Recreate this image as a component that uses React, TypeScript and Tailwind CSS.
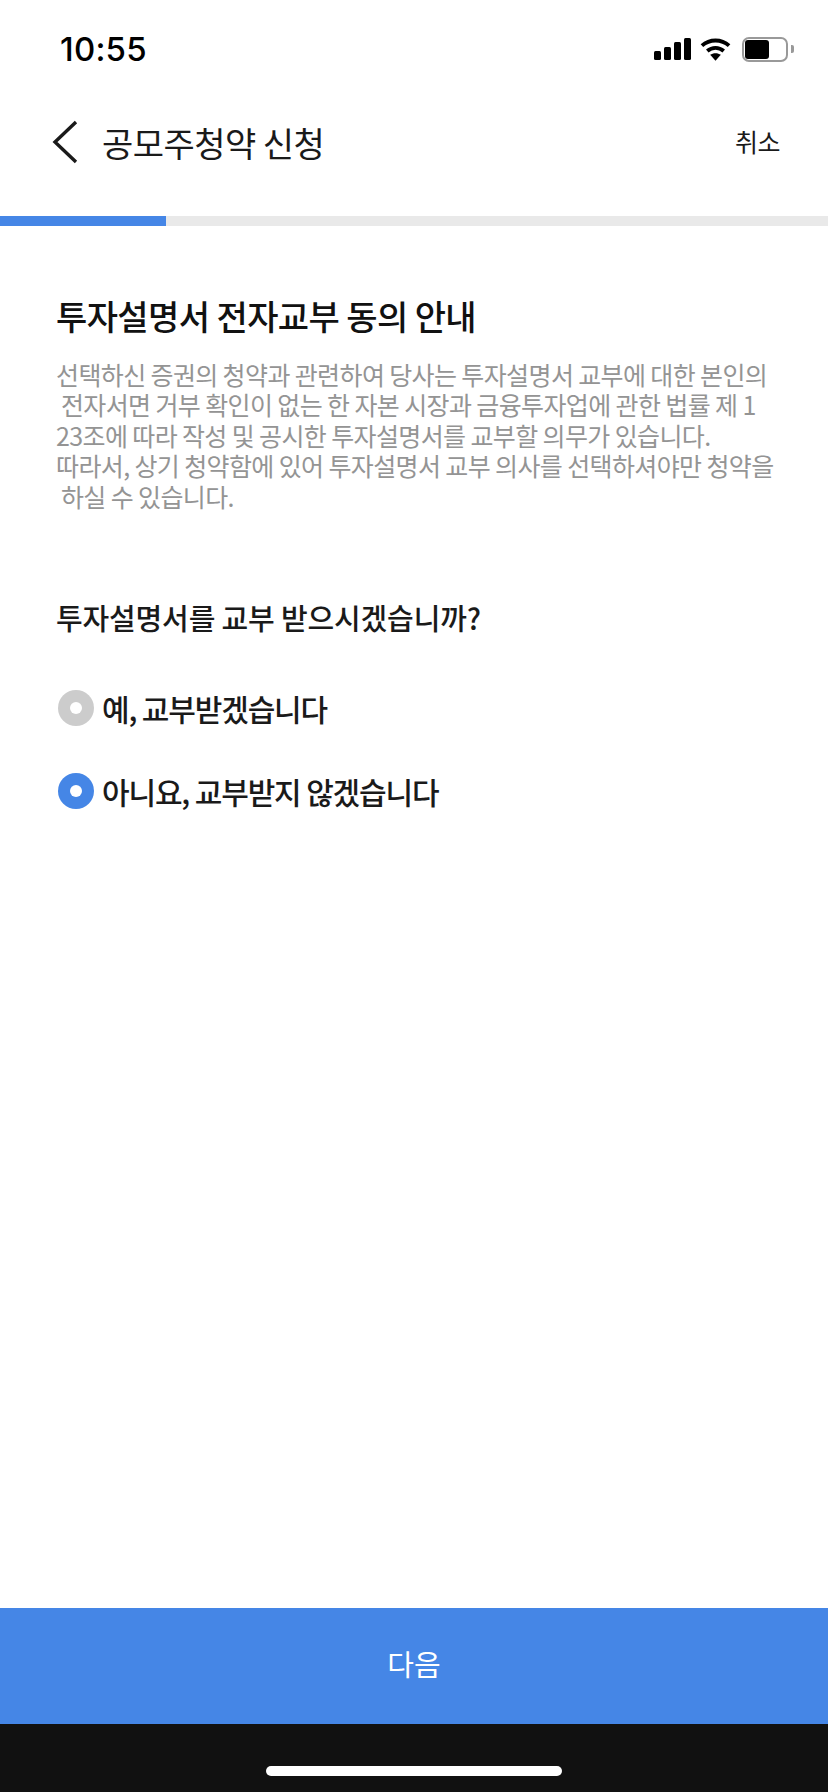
const cjk = { fontFamily: '"Noto Sans CJK KR", "Liberation Sans", sans-serif' };

const bodyLines = [
  '선택하신 증권의 청약과 관련하여 당사는 투자설명서 교부에 대한 본인의',
  ' 전자서면 거부 확인이 없는 한 자본 시장과 금융투자업에 관한 법률 제 1',
  '23조에 따라 작성 및 공시한 투자설명서를 교부할 의무가 있습니다.',
  '따라서, 상기 청약함에 있어 투자설명서 교부 의사를 선택하셔야만 청약을',
  ' 하실 수 있습니다.',
];

function Radio({ label, on }: { label: string; on?: boolean }) {
  return (
    <div className="flex items-center h-[36px]">
      <div className={`w-[36px] h-[36px] rounded-full flex items-center justify-center ${on ? 'bg-[#4586e6]' : 'bg-[#cccccc]'}`}>
        <div className="w-[12px] h-[12px] rounded-full bg-white" />
      </div>
      <span className="ml-[8px] text-[30px] leading-[36px] font-medium text-[#1a1a1a] tracking-[-1.15px]">{label}</span>
    </div>
  );
}

export default function App() {
  return (
    <div className="w-[828px] h-[1792px] bg-white flex flex-col" style={cjk}>
      {/* status bar */}
      <div className="h-[90px] flex items-start justify-between pl-[60px] pr-[34px] pt-[29px]">
        <span className="text-[33px] leading-[40px] font-medium text-black tracking-[0.2px]" style={{ fontFamily: 'Inter, sans-serif' }}>10:55</span>
        <div className="h-[40px] flex items-center">
          <svg width="37" height="24" viewBox="0 0 37 24" fill="black">
            <rect x="0" y="14" width="7" height="9" rx="1.5" />
            <rect x="10" y="10" width="7" height="13" rx="1.5" />
            <rect x="20" y="5" width="7" height="18" rx="1.5" />
            <rect x="30" y="1" width="7" height="22" rx="1.5" />
          </svg>
          <svg className="ml-[9px]" width="31" height="24" viewBox="0 0 32 24" fill="none" stroke="black" strokeWidth="4">
            <path d="M2 8.5C10 1.5 22 1.5 30 8.5" />
            <path d="M7.5 14C12.5 9.8 19.5 9.8 24.5 14" />
            <path d="M16 24L10.5 18C13.5 15.7 18.5 15.7 21.5 18Z" fill="black" stroke="none" />
          </svg>
          <div className="ml-[11px] flex items-center">
            <div className="w-[46px] h-[25px] rounded-[7px] border-2 border-[#999999] p-[1px]">
              <div className="w-[24px] h-full rounded-[3px] bg-black" />
            </div>
            <div className="ml-[3px] w-[3px] h-[8px] rounded-r-[2px] bg-[#999999]" />
          </div>
        </div>
      </div>

      {/* header */}
      <div className="h-[104px] flex items-center justify-between pl-[52px] pr-[48px]">
        <div className="flex items-center">
          <svg width="26" height="44" viewBox="0 0 26 44" fill="none" stroke="#1a1a1a" strokeWidth="3.4">
            <path d="M24 2L3 22L24 42" />
          </svg>
          <span className="ml-[24px] text-[34px] text-[#1a1a1a] tracking-[-0.55px]">공모주청약 신청</span>
        </div>
        <span className="text-[25px] text-[#1a1a1a] tracking-[-0.5px]">취소</span>
      </div>

      {/* progress */}
      <div className="mt-[22px] h-[10px] bg-[#e9e9e9]">
        <div className="w-[166px] h-full bg-[#4586e6]" />
      </div>

      <div className="flex-1 px-[56px] pt-[66px]">
        <h1 className="text-[34px] leading-[48px] font-medium text-[#111111] tracking-[-0.6px]">투자설명서 전자교부 동의 안내</h1>
        <div className="mt-[19px] text-[25px] leading-[30.4px] text-[#949494] tracking-[-0.62px] whitespace-pre">
          {bodyLines.map((line) => (
            <div key={line}>{line}</div>
          ))}
        </div>
        <h2 className="mt-[86px] text-[29px] leading-[40px] font-medium text-[#1a1a1a] tracking-[-0.15px]">투자설명서를 교부 받으시겠습니까?</h2>
        <div className="mt-[53px] ml-[2px] flex flex-col gap-[47px]">
          <Radio label="예, 교부받겠습니다" />
          <Radio label="아니요, 교부받지 않겠습니다" on />
        </div>
      </div>

      {/* next button */}
      <div className="h-[116px] bg-[#4586e6] flex items-center justify-center pb-[5px] text-[29px] text-white">다음</div>
      <div className="h-[68px] bg-[#111111] flex justify-center pt-[42px]">
        <div className="w-[296px] h-[10px] rounded-full bg-white" />
      </div>
    </div>
  );
}
